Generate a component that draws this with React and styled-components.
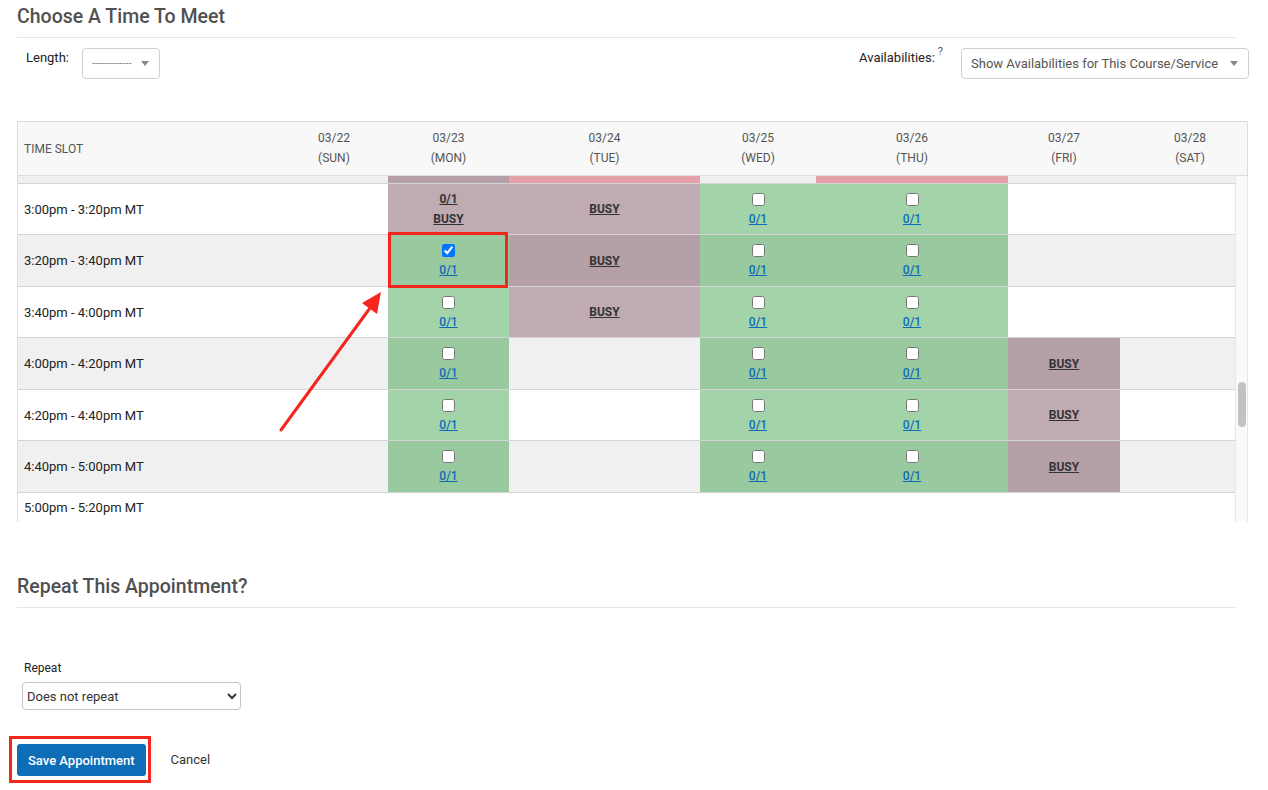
import React, { useLayoutEffect, useRef } from "react";
import styled, { createGlobalStyle, css } from "styled-components";

const GlobalStyle = createGlobalStyle`
  body {
    margin: 0;
    background: #fff;
    font-family: Roboto, "Noto Sans", Arial, sans-serif;
    color: #222;
  }
`;

const DAYS = [
  { key: "sun", date: "03/22", label: "(SUN)" },
  { key: "mon", date: "03/23", label: "(MON)" },
  { key: "tue", date: "03/24", label: "(TUE)" },
  { key: "wed", date: "03/25", label: "(WED)" },
  { key: "thu", date: "03/26", label: "(THU)" },
  { key: "fri", date: "03/27", label: "(FRI)" },
  { key: "sat", date: "03/28", label: "(SAT)" },
];

const COLUMNS = "262px 108px 121px 191px 116px 192px 112px 1fr";
const FIRST_SLOT = 4 * 60 + 40;
const SLOT_COUNT = 52;
const FOCUS_SLOT = 30;
const FOCUS_PEEK = 8;

const OPEN = { mon: "open", wed: "open", thu: "open" };
const SCHEDULE = {
  30: { mon: "busy", tue: "blocked", thu: "blocked" },
  31: { mon: "partial", tue: "busy", wed: "open", thu: "open" },
  32: { mon: "selected", tue: "busy", wed: "open", thu: "open" },
  33: { mon: "open", tue: "busy", wed: "open", thu: "open" },
  34: { ...OPEN, fri: "busy" },
  35: { ...OPEN, fri: "busy" },
  36: { ...OPEN, fri: "busy" },
};

const COLORS = {
  open: ["#a3d3a8", "#99c99e"],
  selected: ["#a3d3a8", "#99c99e"],
  busy: ["#c0abb3", "#b5a0a8"],
  partial: ["#c0abb3", "#b5a0a8"],
  blocked: ["#eeaab2", "#e5a0a8"],
};

function formatTime(minutes) {
  const h = Math.floor(minutes / 60) % 24;
  const m = minutes % 60;
  const suffix = h >= 12 ? "pm" : "am";
  const hh = h % 12 === 0 ? 12 : h % 12;
  return `${hh}:${String(m).padStart(2, "0")}${suffix}`;
}

const slots = Array.from({ length: SLOT_COUNT }, (_, i) => {
  const start = FIRST_SLOT + i * 20;
  const cells = SCHEDULE[i] || {};
  const alt = i % 2 === 0;
  const filled = Object.keys(cells).length > 0;
  return {
    id: i,
    alt,
    label: `${formatTime(start)} - ${formatTime(start + 20)} MT`,
    cells,
    height: filled ? (alt ? 52 : 51) : 30,
  };
});

const scrollTarget =
  slots.slice(0, FOCUS_SLOT).reduce((sum, s) => sum + s.height, 0) +
  slots[FOCUS_SLOT].height -
  FOCUS_PEEK;

function App() {
  const bodyRef = useRef(null);

  useLayoutEffect(() => {
    if (bodyRef.current) bodyRef.current.scrollTop = scrollTarget;
  }, []);

  return (
    <Page>
      <GlobalStyle />
      <SectionTitle>Choose A Time To Meet</SectionTitle>

      <Filters>
        <FilterGroup $indent>
          <FilterLabel>Length:</FilterLabel>
          <FakeSelect $width={78}>
            <Placeholder>-------------</Placeholder>
            <Caret />
          </FakeSelect>
        </FilterGroup>
        <FilterGroup>
          <FilterLabel>
            Availabilities:<Help>?</Help>
          </FilterLabel>
          <FakeSelect $width={288}>
            <SelectText>Show Availabilities for This Course/Service</SelectText>
            <Caret />
          </FakeSelect>
        </FilterGroup>
      </Filters>

      <Table>
        <HeaderRow>
          <HeaderSlot>TIME SLOT</HeaderSlot>
          {DAYS.map((d) => (
            <HeaderDay key={d.key} $last={d.key === "sat"}>
              <span>{d.date}</span>
              <span>{d.label}</span>
            </HeaderDay>
          ))}
        </HeaderRow>

        <BodyWrap>
          <Body ref={bodyRef}>
            {slots.map((slot) => (
              <Row key={slot.id} $alt={slot.alt} $h={slot.height}>
                <TimeCell>{slot.label}</TimeCell>
                {DAYS.map((d) => {
                  const status = slot.cells[d.key];
                  return (
                    <Cell
                      key={d.key}
                      $status={status}
                      $alt={slot.alt}
                      $highlight={status === "selected"}
                    >
                      {(status === "open" || status === "selected") && (
                        <>
                          <Check
                            type="checkbox"
                            defaultChecked={status === "selected"}
                          />
                          <CountLink href="#">0/1</CountLink>
                        </>
                      )}
                      {status === "partial" && (
                        <>
                          <BusyLink href="#">0/1</BusyLink>
                          <BusyLink href="#">BUSY</BusyLink>
                        </>
                      )}
                      {status === "busy" && <BusyLink href="#">BUSY</BusyLink>}
                    </Cell>
                  );
                })}
              </Row>
            ))}
          </Body>
          <ScrollTrack>
            <ScrollThumb $offset={206} $size={45} />
          </ScrollTrack>
          <Arrow width="130" height="170" viewBox="0 0 130 170">
            <line
              x1="14"
              y1="153"
              x2="103"
              y2="31"
              stroke="#f5261f"
              strokeWidth="3"
              strokeLinecap="round"
            />
            <polygon points="114,15 110,37 95,26" fill="#f5261f" />
          </Arrow>
        </BodyWrap>
      </Table>

      <SectionTitle $top={53}>Repeat This Appointment?</SectionTitle>

      <RepeatField>
        <RepeatLabel htmlFor="repeat">Repeat</RepeatLabel>
        <RepeatSelect id="repeat" defaultValue="none">
          <option value="none">Does not repeat</option>
          <option value="daily">Daily</option>
          <option value="weekly">Weekly</option>
        </RepeatSelect>
      </RepeatField>

      <Actions>
        <Callout>
          <PrimaryButton type="button">Save Appointment</PrimaryButton>
        </Callout>
        <CancelButton type="button">Cancel</CancelButton>
      </Actions>
    </Page>
  );
}

export default App;

const Page = styled.div`
  width: 1268px;
  box-sizing: border-box;
  padding: 5px 19px 20px 17px;
`;

const SectionTitle = styled.h2`
  margin: ${(p) => p.$top || 0}px 13px 0 0;
  padding-bottom: 8px;
  font-size: 19.5px;
  line-height: 24px;
  font-weight: 500;
  color: #505050;
  border-bottom: 1px solid #e6e6e6;
`;

const Filters = styled.div`
  display: flex;
  justify-content: space-between;
  align-items: flex-start;
  margin-top: 10px;
`;

const FilterGroup = styled.div`
  display: flex;
  align-items: flex-start;
  gap: ${(p) => (p.$indent ? 13 : 18)}px;
  padding-left: ${(p) => (p.$indent ? 9 : 0)}px;
`;

const FilterLabel = styled.span`
  padding-top: 2px;
  font-size: 13px;
  line-height: 16px;
  color: #222;
`;

const Help = styled.span`
  position: relative;
  top: -7px;
  margin-left: 3px;
  font-size: 11px;
  line-height: 0;
  color: #555;
`;

const FakeSelect = styled.div`
  display: flex;
  align-items: center;
  justify-content: space-between;
  width: ${(p) => p.$width}px;
  height: 31px;
  box-sizing: border-box;
  padding: 0 10px 0 9px;
  border: 1px solid #cfcfcf;
  border-radius: 4px;
  background: #fff;
`;

const Placeholder = styled.span`
  font-size: 11px;
  color: #8a8a8a;
`;

const SelectText = styled.span`
  font-size: 13px;
  color: #555;
`;

const Caret = styled.span`
  width: 0;
  height: 0;
  border-left: 4px solid transparent;
  border-right: 4px solid transparent;
  border-top: 5px solid #888;
`;

const Table = styled.div`
  margin-top: 42px;
  width: 1231px;
`;

const HeaderRow = styled.div`
  display: grid;
  grid-template-columns: ${COLUMNS};
  height: 55px;
  box-sizing: border-box;
  border: 1px solid #dcdcdc;
  background: #f8f8f8;
`;

const HeaderSlot = styled.div`
  display: flex;
  align-items: center;
  padding-left: 6px;
  font-size: 12px;
  color: #555;
`;

const HeaderDay = styled.div`
  display: flex;
  flex-direction: column;
  align-items: center;
  justify-content: center;
  padding-left: ${(p) => (p.$last ? 13 : 0)}px;
  padding-bottom: 2px;
  font-size: 12px;
  line-height: 20px;
  color: #555;
`;

const BodyWrap = styled.div`
  position: relative;
  display: flex;
  height: 346px;
`;

const Body = styled.div`
  width: 1218px;
  height: 100%;
  overflow-y: scroll;
  box-sizing: border-box;
  border-left: 1px solid #dcdcdc;
  scrollbar-width: none;

  &::-webkit-scrollbar {
    display: none;
  }
`;

const ScrollTrack = styled.div`
  width: 13px;
  box-sizing: border-box;
  padding-left: 2px;
  background: #fafafa;
  border-left: 1px solid #e6e6e6;
  border-right: 1px solid #e6e6e6;
`;

const ScrollThumb = styled.div`
  width: 8px;
  height: ${(p) => p.$size}px;
  margin-top: ${(p) => p.$offset}px;
  border-radius: 4px;
  background: #c2c2c2;
`;

const Row = styled.div`
  display: grid;
  grid-template-columns: ${COLUMNS};
  height: ${(p) => p.$h}px;
  box-sizing: border-box;
  border-bottom: 1px solid #d4d4d4;
  background: ${(p) => (p.$alt ? "#f0f0f0" : "#fff")};
`;

const TimeCell = styled.div`
  display: flex;
  align-items: center;
  padding-left: 6px;
  font-size: 13px;
  color: #222;
`;

const Cell = styled.div`
  position: relative;
  display: flex;
  flex-direction: column;
  align-items: center;
  justify-content: center;
  background: ${(p) =>
    p.$status ? COLORS[p.$status][p.$alt ? 1 : 0] : "transparent"};

  ${(p) =>
    p.$highlight &&
    css`
      &::after {
        content: "";
        position: absolute;
        top: -3px;
        left: 0;
        right: 1px;
        bottom: -2px;
        border: 3px solid #f3261e;
        z-index: 2;
        pointer-events: none;
      }
    `}
`;

const Check = styled.input`
  width: 13px;
  height: 13px;
  margin: 0 0 6px;
`;

const CountLink = styled.a`
  font-size: 12px;
  line-height: 14px;
  font-weight: 500;
  color: #0d6cb7;
  text-decoration: underline;
`;

const BusyLink = styled.a`
  font-size: 12px;
  line-height: 20px;
  font-weight: 700;
  color: #333;
  text-decoration: underline;
`;

const Arrow = styled.svg`
  position: absolute;
  left: 250px;
  top: 101px;
  pointer-events: none;
`;

const RepeatField = styled.div`
  display: flex;
  flex-direction: column;
  align-items: flex-start;
  margin-top: 52px;
  padding-left: 5px;
`;

const RepeatLabel = styled.label`
  padding-left: 2px;
  font-size: 12px;
  line-height: 16px;
  color: #222;
`;

const RepeatSelect = styled.select`
  margin-top: 6px;
  width: 219px;
  height: 28px;
  padding: 0;
  border: 1px solid #c4c4c4;
  border-radius: 4px;
  background: #fff;
  font-family: Roboto, "Noto Sans", Arial, sans-serif;
  font-size: 13px;
  color: #333;
`;

const Actions = styled.div`
  display: flex;
  align-items: center;
  gap: 20px;
  margin: 26px 0 0 -8px;
`;

const Callout = styled.div`
  display: inline-flex;
  padding: 5px 2px 4px 5px;
  border: 3px solid #f3261e;
`;

const PrimaryButton = styled.button`
  height: 32px;
  padding: 0 11px;
  border: 0;
  border-radius: 3px;
  background: #0e6db7;
  color: #fff;
  font-family: Roboto, "Noto Sans", Arial, sans-serif;
  font-size: 13px;
  font-weight: 500;
  cursor: pointer;
`;

const CancelButton = styled.button`
  padding: 0;
  border: 0;
  background: none;
  color: #333;
  font-family: Roboto, "Noto Sans", Arial, sans-serif;
  font-size: 13px;
  cursor: pointer;
`;
